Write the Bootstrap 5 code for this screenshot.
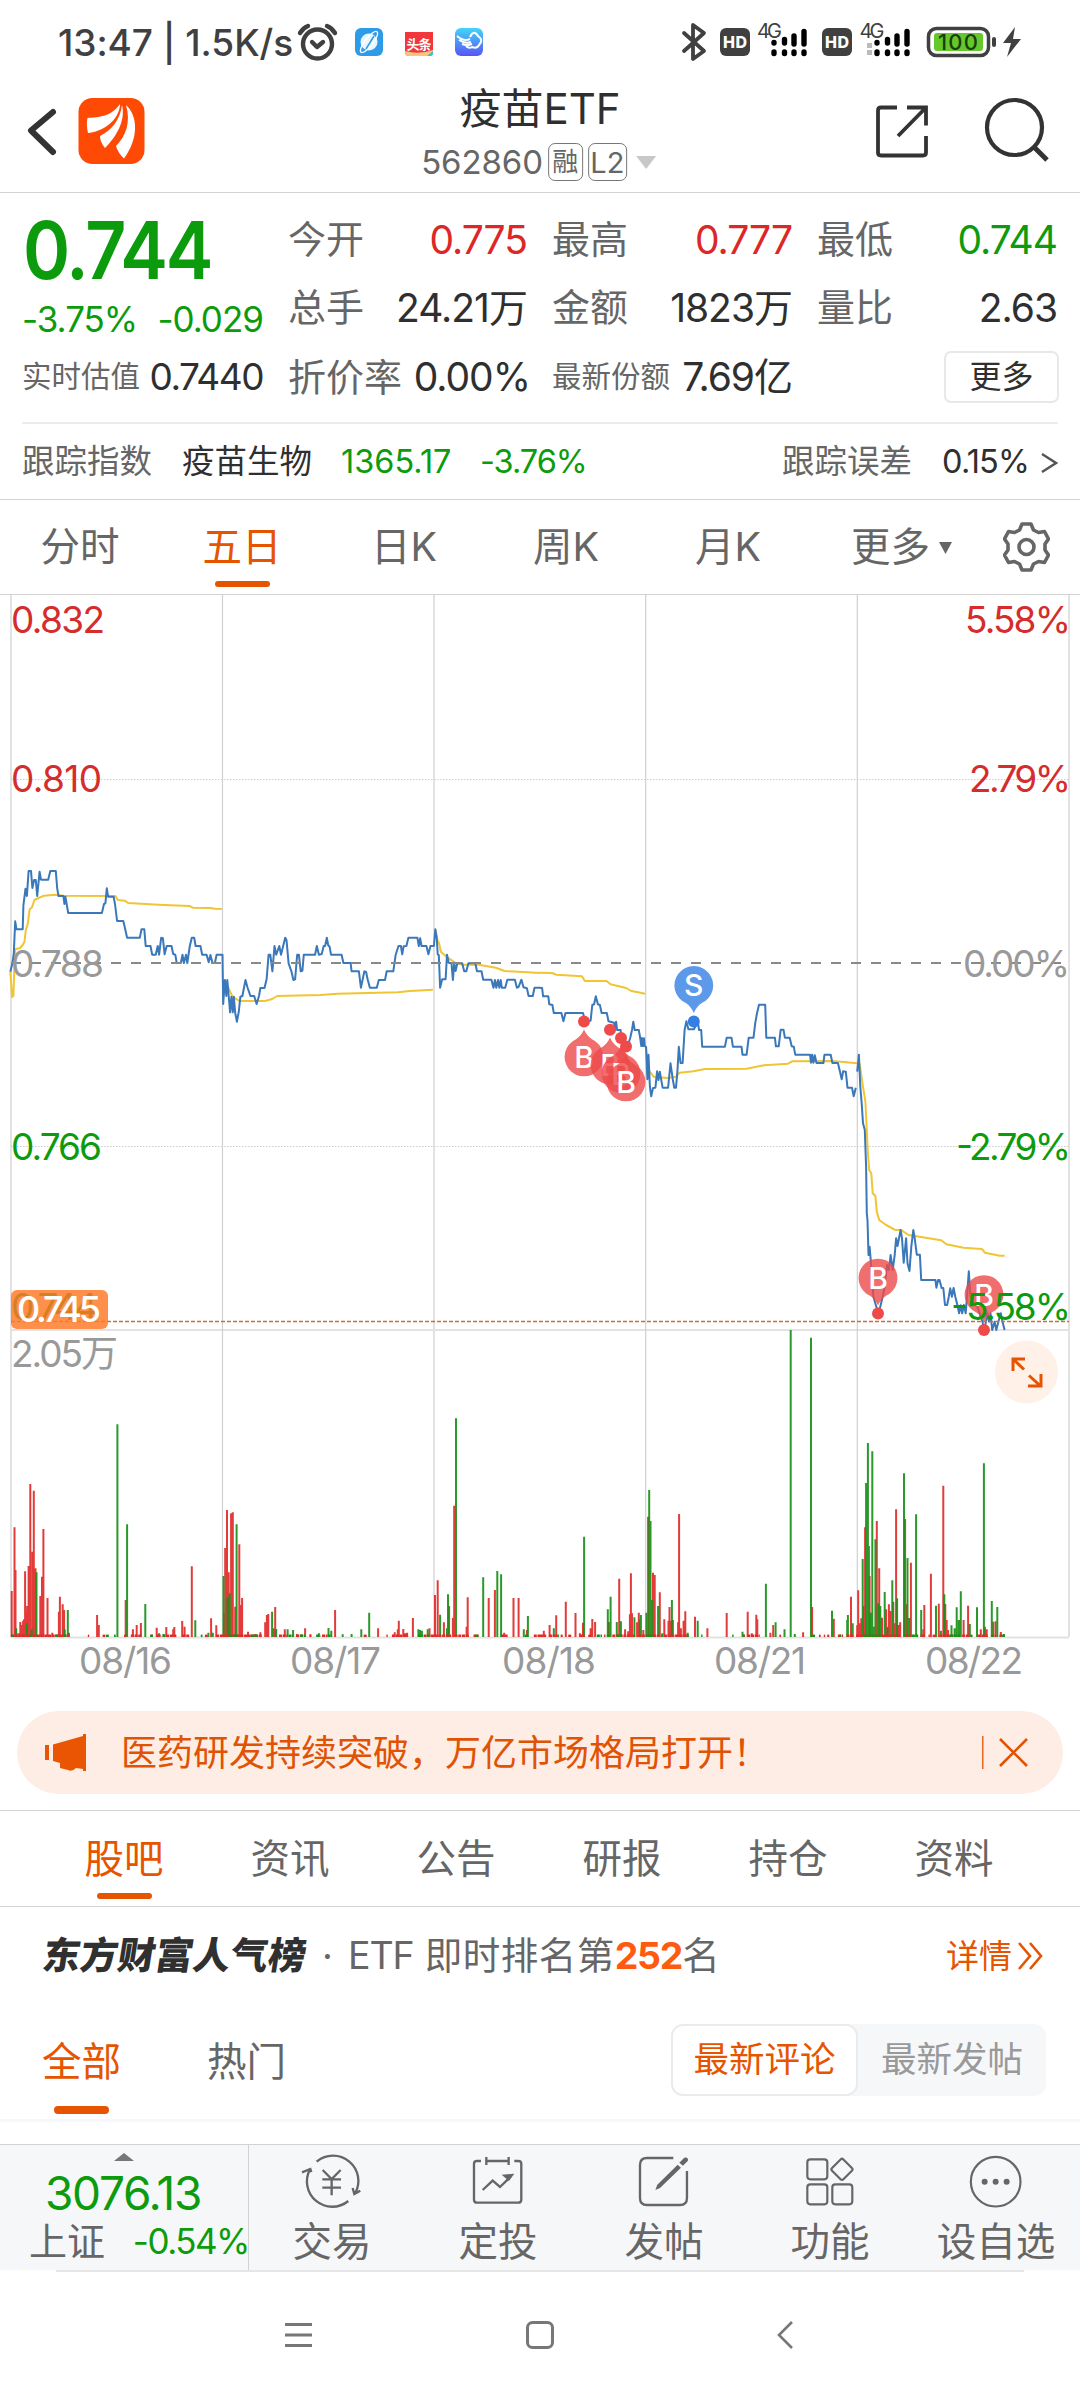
<!DOCTYPE html>
<html lang="zh-CN">
<head>
<meta charset="utf-8">
<meta name="viewport" content="width=device-width, initial-scale=1">
<title>疫苗ETF 562860</title>
<link href="https://cdn.jsdelivr.net/npm/bootstrap@5.3.0/dist/css/bootstrap.min.css" rel="stylesheet">
<style>
:root{--up:#dd2727;--down:#0c9b0c;--brand:#e65400;--ink:#2f2f2f;--sub:#666;--rule:#d2d2d2}
body{width:1080px;height:2400px;margin:0;overflow:hidden;background:#fff;color:var(--ink);font-family:Inter,"Noto Sans CJK SC",sans-serif;font-size:38px;line-height:1;font-weight:400;white-space:nowrap}
svg{display:block;flex:none}
svg text{font-family:Inter,"Noto Sans CJK SC",sans-serif}
.up{color:var(--up)}.down{color:var(--down)}.sub{color:var(--sub)}.brand{color:var(--brand)}
.status-bar{height:84px;padding:0 0 0 58px;color:#404040}
.status-bar .clock{font-size:37px;font-weight:500;width:236px;letter-spacing:-.05px}
.title-bar{height:109px;border-bottom:1px solid var(--rule)}
.title-bar .heading{font-size:42px;height:46px;line-height:46px}
.title-bar .code{font-size:33px;color:#666;letter-spacing:-.1px}
.tag-box{border:1.6px solid #777;border-radius:7px;height:38px;font-size:26px;color:#666}
.quote{height:307px;border-bottom:1px solid var(--rule)}
.quote-grid{display:grid;grid-template-columns:240px 238px 239px 239px;column-gap:26px;padding-left:23px}
.price{font-size:80px;font-weight:600;height:112px;line-height:114px;letter-spacing:-2.4px;transform:scaleX(.895);transform-origin:0 0}
.delta{font-size:35px;height:28px;line-height:28px;letter-spacing:-1px;margin-left:-1px}
.cell68{height:68px}
.quote-grid .sub{margin-left:-1px}
.num{font-size:39px;letter-spacing:-1px}
.s30{font-size:29.5px}
.more-btn{width:115px;height:52px;border:2px solid #e8e8e8;border-radius:7px;font-size:32px;color:var(--ink);padding:0;line-height:46px}
.track{height:76px;font-size:32.5px;margin:0 22px;border-top:2px solid #ececec;padding-top:3px}
.period-tabs{height:95px;font-size:39.5px;color:var(--sub);border-bottom:1px solid var(--rule)}
.period-tabs .tab{width:162px;left:-1px}
.tab{position:relative;height:100%;display:flex;align-items:center;justify-content:center;padding-top:2px}
.tab.on{color:var(--brand)}
.tab.on::after{content:"";position:absolute;left:50%;bottom:7px;width:55px;height:6px;margin-left:-27.5px;border-radius:4px;background:var(--brand)}
.notice{height:83px;margin:17px 17px 16px;border-radius:42px;background:#fdede4;color:#e05204;font-size:36px;padding:0 35px 0 28px}
.news-tabs{height:97px;border-top:1px solid var(--rule);border-bottom:1px solid var(--rule);padding:0 42px;font-size:39.5px;color:var(--sub)}
.news-tabs .tab{width:166px;left:-1px}
.rank{height:98px;padding:0 36px 0 43px;font-size:37.5px;color:var(--sub)}
.rank .brandmark{font-weight:900;font-size:37.6px;transform:skewX(-9deg);color:#303030;width:264px}
.filter{height:117px;padding:0 34px 0 42px;font-size:39.5px;border-bottom:3px solid #f6f7f8}
.filter .tab{height:114px}
.filter .tab.on::after{bottom:5px;height:8px}
.seg{height:72px;width:375px;background:#f6f7f9;border-radius:12px;font-size:35.5px}
.seg .pick{width:187px;height:72px;border:2px solid #eaebec;border-radius:12px;background:#fff;color:var(--brand)}
.dock{height:126px;margin-top:22px;background:#f6f7f9;border-top:1px solid var(--rule);color:#666;position:relative}
.dock .index{width:249px;border-right:1px solid var(--rule)}
.dock .item{width:166px;padding-top:8px;font-size:39.5px}
.dock .item span{line-height:50px;margin-top:7px}
.dock-line{height:2px;margin:0 56px;background:#e6e6e6}
.sysnav{height:126px;padding:0 287px 0 285px}
</style>
<script src="https://cdn.jsdelivr.net/npm/bootstrap@5.3.0/dist/js/bootstrap.bundle.min.js"></script>
</head>
<body>
<header>
<div class="status-bar d-flex align-items-center">
  <span class="clock">13:47 | 1.5K/s</span>
  <svg width="786" height="84" viewBox="294 0 786 84">
    <g fill="none" stroke="#404040" stroke-width="4.4" stroke-linecap="round" stroke-linejoin="round">
      <circle cx="317.500" cy="44" r="14.500"/><path d="M312 42l5 5 6-5M300 33q3-5 8-7M335 33q-3-5-8-7"/>
      <path d="M684 33l20 18-11 8V25l11 8-20 18" stroke-width="3.800"/>
    </g>
    <defs><linearGradient id="pb" x2="0" y2="1"><stop stop-color="#42d5fa"/><stop offset="1" stop-color="#5a54f5"/></linearGradient></defs>
    <rect x="355" y="28" width="28" height="28" rx="6" fill="#2e9be8"/>
    <circle cx="369" cy="42" r="8.500" fill="#eaf6ff"/><ellipse cx="369" cy="42" rx="13" ry="4" transform="rotate(-52 369 42)" fill="none" stroke="#fff" stroke-width="1.300"/>
    <path d="M366 49l8-13" stroke="#2e9be8" stroke-width="1.500"/>
    <path d="M405 32h28v20q0 4-4 4h-20q-4 0-4-4z" fill="#f2363b"/><path d="M405 51q14 4 28-1v3q-1 3-4 3h-20q-4 0-4-4z" fill="#f7c67c"/><path d="M427 56l6-5v2q0 3-3 3z" fill="#28c5dc"/>
    <text x="406.500" y="48.500" font-size="13" font-weight="700" fill="#fff" textLength="25">头条</text>
    <rect x="455" y="28" width="28" height="28" rx="6" fill="url(#pb)"/>
    <path d="M457 36q7 6 13 3M459 40q6 4 12 2M462 44q5 2 10 0M470 37q4-8 8-1 6 4 1 9-2 4-7 2-3 2-6-1" fill="none" stroke="#fff" stroke-width="2"/>
    <g fill="#404040"><rect x="720" y="28" width="30" height="28" rx="6"/><rect x="822" y="28" width="30" height="28" rx="6"/></g>
    <g fill="#fff" font-size="16" font-weight="800"><text x="723" y="48" textLength="24">HD</text><text x="825" y="48" textLength="24">HD</text></g>
    <g fill="#404040" font-size="20"><text x="757" y="38" textLength="25">4G</text><text x="859.500" y="38" textLength="25">4G</text></g>
    <g stroke="#000" stroke-width="5.400" stroke-linecap="round">
      <path d="M774 42.500v.5M774 52v1.500M784.500 39.500v3.500M784.500 52v1.500M794 36v8M794 52v1.500M804 31.500v12.500M804 52v1.500"/>
      <path d="M877 42.500v.5M877 52v1.500M887.500 39.500v3.500M887.500 52v1.500M897 36v8M897 52v1.500M907 31.500v12.500M907 52v1.500"/>
    </g>
    <path d="M867 43h5v5h-5zM867 50h5v5h-5z" fill="#bbb"/>
    <rect x="928.500" y="28.500" width="60" height="27" rx="8" fill="#fff" stroke="#404040" stroke-width="3.500"/>
    <rect x="934" y="33" width="49" height="18" rx="3" fill="#64c82c"/><rect x="992" y="37" width="4" height="10" rx="2" fill="#404040"/>
    <text x="938" y="50" font-size="22" font-weight="500" fill="#1d3d0c" textLength="40">100</text>
    <path d="M1015 27l-12 16h8l-4 14 14-18h-8z" fill="#404040"/>
  </svg>
</div>
<div class="title-bar position-relative d-flex align-items-start justify-content-between">
  <svg width="150" height="100" viewBox="0 84 150 100">
    <path d="M53 112L31 130.500 53 152" fill="none" stroke="#333" stroke-width="6" stroke-linecap="round" stroke-linejoin="round"/>
    <rect x="78.500" y="98" width="66" height="66" rx="14" fill="#ff4a05"/>
    <path d="M87.500 118C99 117 111 117 120 104C120 116 108 131 88 133Q86 125 87.500 118Z M100 136C112 130 120 120 122 105C126 121 116 137 105 148Q100 142 100 136Z M116 146C126 136 131 122 126 105C138 116 139 138 124 158.500Q118 153 116 146Z" fill="#fff"/>
  </svg>
  <div class="position-absolute start-50 translate-middle-x d-flex flex-column align-items-center">
    <div class="heading" style="margin-top:2px">疫苗ETF</div>
    <div class="d-flex align-items-center" style="gap:5px;margin:11px 3px 0 0;height:38px">
      <span class="code">562860</span>
      <span class="tag-box d-flex align-items-center justify-content-center" style="width:35px">融</span>
      <span class="tag-box d-flex align-items-center justify-content-center" style="width:39px;font-size:29px">L2</span>
      <svg width="20" height="13" style="margin-left:4px"><path d="M0 0h20L10 13z" fill="#c8c8c8"/></svg>
    </div>
  </div>
  <svg width="230" height="100" viewBox="850 84 230 100" fill="none" stroke="#333" stroke-width="3.800">
    <path d="M897 107.500h-16q-3 0-3 3v42q0 3 3 3h42q3 0 3-3v-16.500M907 107.500h19v18M926 107.500L898 136"/>
    <circle cx="1014.500" cy="127.500" r="27.500" stroke-width="4.200"/><path d="M1034 147l13 13" stroke-width="5"/>
  </svg>
</div>
</header>

<section class="quote">
  <div class="quote-grid">
    <div class="down">
      <div class="price">0.744</div>
      <div class="delta d-flex justify-content-between"><span>-3.75%</span><span>-0.029</span></div>
    </div>
    <div style="padding-top:12px">
      <div class="cell68 d-flex align-items-center justify-content-between"><span class="sub">今开</span><span class="num up">0.775</span></div>
      <div class="cell68 d-flex align-items-center justify-content-between"><span class="sub">总手</span><span class="num">24.21万</span></div>
    </div>
    <div style="padding-top:12px">
      <div class="cell68 d-flex align-items-center justify-content-between"><span class="sub">最高</span><span class="num up">0.777</span></div>
      <div class="cell68 d-flex align-items-center justify-content-between"><span class="sub">金额</span><span class="num">1823万</span></div>
    </div>
    <div style="padding-top:12px">
      <div class="cell68 d-flex align-items-center justify-content-between"><span class="sub">最低</span><span class="num down">0.744</span></div>
      <div class="cell68 d-flex align-items-center justify-content-between"><span class="sub">量比</span><span class="num">2.63</span></div>
    </div>
  </div>
  <div class="quote-grid" style="height:81px">
    <div class="d-flex align-items-center justify-content-between" style="height:71px"><span class="sub s30">实时估值</span><span style="font-size:37px;letter-spacing:-1.500px">0.7440</span></div>
    <div class="d-flex align-items-center justify-content-between" style="height:71px"><span class="sub">折价率</span><span class="num" style="letter-spacing:-1px;margin-right:-3px">0.00%</span></div>
    <div class="d-flex align-items-center justify-content-between" style="height:71px"><span class="sub s30">最新份额</span><span class="num">7.69亿</span></div>
    <div class="d-flex align-items-center justify-content-end" style="height:71px;margin-right:-2px"><button class="more-btn btn bg-white">更多</button></div>
  </div>
  <div class="track d-flex align-items-center justify-content-between">
    <div class="d-flex"><span class="sub" style="width:160px">跟踪指数</span><span style="width:159px">疫苗生物</span><span class="down" style="width:139px;letter-spacing:0">1365.17</span><span class="down" style="letter-spacing:-1px">-3.76%</span></div>
    <div class="d-flex align-items-center"><span class="sub" style="width:160px">跟踪误差</span><span style="width:99px;letter-spacing:-.800px">0.15%</span>
      <svg width="17" height="20" viewBox="0 0 17 20"><path d="M1 1l14 9L1 19" fill="none" stroke="#555" stroke-width="2.400"/></svg></div>
  </div>
</section>

<nav class="period-tabs d-flex">
  <span class="tab">分时</span><span class="tab on">五日</span><span class="tab">日K</span><span class="tab">周K</span><span class="tab">月K</span>
  <span class="tab" style="width:185px">更多<svg width="13" height="12" style="margin-left:9px"><path d="M0 0h13L6.500 12z" fill="#666"/></svg></span>
  <svg class="align-self-center" style="margin-left:8px" width="47" height="50" viewBox="0 0 47 50" fill="none" stroke="#666" stroke-width="3.600" stroke-linejoin="round"><path d="M19 2h9l2.500 6 5 2.500 6-1 4 7.500-3.500 5v6l3.500 5-4 7.500-6-1-5 2.500-2.500 6h-9l-2.500-6-5-2.500-6 1-4-7.500 3.500-5v-6l-3.500-5 4-7.500 6 1 5-2.500z"/><circle cx="23.500" cy="25" r="7.500"/></svg>
</nav>

<main>
<svg id="chart" width="1080" height="1099" viewBox="0 595 1080 1099">
  <g fill="none" stroke="#e2e2e2" stroke-width="2">
    <path d="M11 595V1637M434 595V1637M1069 595V1637M11 1330H1069M11 1637.500H1069"/>
    <path d="M222.500 595V1637M645.700 595V1637M857.300 595V1637" stroke="#d0d0d0" stroke-width="1.200"/>
    <path d="M11 779.500H1069M11 1146.500H1069" stroke="#ccc" stroke-width="1" stroke-dasharray="1.500 1.500"/>
  </g>
  <g id="volume"></g>
  <g id="lines" fill="none" stroke-linejoin="round"></g>
  <path d="M11 963H1069" stroke="#888" stroke-width="2" stroke-dasharray="10 10"/>
  <path d="M11 1321.500H1069" stroke="#c8703a" stroke-width="1.300" stroke-dasharray="4 2"/>
  <g id="pins"></g>
  <g font-size="37">
    <g fill="#d52c2c"><text x="11" y="633" textLength="94">0.832</text><text x="11" y="792" textLength="91">0.810</text><text x="965" y="633" textLength="106">5.58%</text><text x="969" y="792" textLength="102">2.79%</text></g>
    <g fill="#999"><text x="11" y="976.500" textLength="93">0.788</text><text x="963" y="976.500" textLength="107">0.00%</text><text x="11" y="1367" textLength="107">2.05万</text>
      <text x="79" y="1674" textLength="93">08/16</text><text x="290" y="1674" textLength="91">08/17</text><text x="502" y="1674" textLength="94">08/18</text><text x="714" y="1674" textLength="92">08/21</text><text x="925" y="1674" textLength="98">08/22</text></g>
    <g fill="#0c9b0c"><text x="11" y="1159.500" textLength="91">0.766</text><text x="956" y="1159.500" textLength="115">-2.79%</text><text x="951" y="1319.500" textLength="120">-5.58%</text><text x="11" y="1319.500" textLength="87">0.744</text></g>
  </g>
  <rect x="11" y="1290" width="97" height="39" rx="6" fill="#ff7a26" fill-opacity=".83"/>
  <text x="17" y="1321.500" font-size="36" font-weight="500" fill="#fff" textLength="84">0.745</text>
  <circle cx="1026.500" cy="1372" r="31.500" fill="#fff0e8"/>
  <path d="M1013 1371v-12h12M1013.500 1359.500l10.500 10M1028 1386h13v-12M1029 1375.500l11.500 10.500" fill="none" stroke="#e65400" stroke-width="3"/>
</svg>

<div class="notice d-flex align-items-center">
  <svg width="42" height="37" viewBox="0 0 42 37" fill="#ea5504"><path d="M0 11h4v15H0zM8 10.500L38 2V0h3v37h-3v-2l-7-1q-4 4-8 2l-8-2v-5l-7-2z"/></svg>
  <span style="margin-left:34px" class="flex-grow-1">医药研发持续突破，万亿市场格局打开！</span>
  <svg width="46" height="35" viewBox="0 0 46 35" fill="none" stroke="#e05204"><path d="M.8 1v33" stroke-width="1.300"/><path d="M18 4l27 27M45 4L18 31" stroke-width="2.600"/></svg>
</div>

<nav class="news-tabs d-flex"><span class="tab on">股吧</span><span class="tab">资讯</span><span class="tab">公告</span><span class="tab">研报</span><span class="tab">持仓</span><span class="tab">资料</span></nav>

<div class="rank d-flex align-items-center">
  <span class="brandmark">东方财富人气榜</span>
  <span style="width:41px;text-align:center">·</span>
  <span class="flex-grow-1" style="letter-spacing:.500px"><span style="letter-spacing:-1.100px">ETF</span> 即时排名第<b style="color:#ff5b10;letter-spacing:-1.200px">252</b>名</span>
  <span class="brand d-flex align-items-center" style="font-size:33px">详情<svg width="27" height="28" viewBox="0 0 27 28" style="margin-left:5px" fill="none" stroke="#e65400" stroke-width="2.600"><path d="M2 1l11 13L2 27M13 1l11 13-11 13"/></svg></span>
</div>

<div class="filter d-flex align-items-center">
  <span class="tab on" style="width:79px">全部</span><span class="tab" style="margin-left:86px;color:#666">热门</span>
  <div class="seg d-flex ms-auto align-self-start" style="margin-top:19px"><span class="pick d-flex align-items-center justify-content-center">最新评论</span><span class="flex-grow-1 d-flex align-items-center justify-content-center" style="color:#999">最新发帖</span></div>
</div>
</main>

<footer>
<div class="dock d-flex">
  <div class="index">
    <svg width="20" height="8" style="margin:8px 0 0 114px"><path d="M10 0l10 8H0z" fill="#777"/></svg>
    <div class="down" style="font-size:46px;letter-spacing:-1.300px;padding-left:45px;line-height:50px;margin-top:7px">3076.13</div>
    <div class="d-flex justify-content-between align-items-center" style="padding-left:29px;line-height:46px"><span>上证</span><span class="down" style="font-size:35px;letter-spacing:-1.500px;margin-right:-1px">-0.54%</span></div>
  </div>
  <div class="item d-flex flex-column align-items-center"><svg width="63.300" height="56.700" viewBox="120 40 190 170" fill="none" stroke="#666" stroke-width="7"><path d="M170 66A76 76 0 0 1 285 162M301 153L283 163 278 145M265 184A76 76 0 0 1 150 89M126 98L151 88 154 97M188 91L215 118 242 91M187 119H243M187 144H243M215 118V167"/></svg><span>交易</span></div>
  <div class="item d-flex flex-column align-items-center"><svg width="63.300" height="56.700" viewBox="619 40 190 170" fill="none" stroke="#666" stroke-width="7"><path d="M664 64H652Q643 64 643 72V180Q643 189 652 189H776Q785 189 785 180V72Q785 64 776 64H764M680 52V76M747 52V76M680 64H747M669 151L699 123 721 142 750 114"/><path d="M726 105L764 102 748 124Z" fill="#666" stroke="none"/></svg><span>定投</span></div>
  <div class="item d-flex flex-column align-items-center"><svg width="63.300" height="56.700" viewBox="1118 40 190 170" fill="none" stroke="#666" stroke-width="7"><path d="M1242 55H1163Q1142 55 1142 76V175Q1142 196 1163 196H1262Q1283 196 1283 175V94"/><path d="M1188 151L1194 135 1255 75 1265 84 1202 145ZM1260 69L1275 54Q1287 50 1286 63L1271 78Z" fill="#666" stroke="none"/></svg><span>发帖</span></div>
  <div class="item d-flex flex-column align-items-center"><svg width="63.300" height="56.700" viewBox="415 40 190 170" fill="none" stroke="#666" stroke-width="6.500"><rect x="443" y="59" width="60" height="60" rx="9"/><rect x="443" y="134" width="60" height="60" rx="9"/><rect x="518" y="134" width="60" height="60" rx="9"/><rect x="523" y="65" width="48" height="48" rx="6" transform="rotate(45 547 89)"/></svg><span>功能</span></div>
  <div class="item d-flex flex-column align-items-center"><svg width="63.300" height="56.700" viewBox="913 40 190 170" fill="none" stroke="#666" stroke-width="6.500"><circle cx="1008" cy="126" r="74.500"/><g fill="#666" stroke="none"><circle cx="975" cy="126" r="9"/><circle cx="1008" cy="126" r="9"/><circle cx="1041" cy="126" r="9"/></g></svg><span>设自选</span></div>
</div>
<div class="dock-line"></div>
<div class="sysnav d-flex align-items-center justify-content-between">
  <svg width="27" height="26" fill="none" stroke="#777" stroke-width="3"><path d="M0 2.500h27M0 13h27M0 23.500h27"/></svg>
  <svg width="28" height="28" style="margin-right:9px" fill="none" stroke="#777" stroke-width="3"><rect x="1.500" y="1.500" width="25" height="25" rx="5"/></svg>
  <svg width="16" height="28" fill="none" stroke="#777" stroke-width="2.600"><path d="M15 1L2 14l13 13"/></svg>
</div>
</footer>

<script>
const NS='http://www.w3.org/2000/svg';
function el(parent,tag,attrs,text){const e=document.createElementNS(NS,tag);for(const k in attrs)e.setAttribute(k,attrs[k]);if(text)e.textContent=text;parent.appendChild(e);return e;}
const SX=1/2.9037, SY=1/3;
// Every series is a list of raw sample points plus the origin of its half of the canvas.
function pts(raw,ox,oy){return raw.trim().split(/\s+/).map(p=>{const [u,v]=p.split(',').map(Number);return (ox+u*SX).toFixed(1)+','+(oy+v*SY).toFixed(1);}).join(' ');}
const avg=[
 ['30,455 35,531 39,528 42,430 44,388 58,384 66,375 71,365 75,330 81,310 86,268 93,262 100,240 112,234 128,227 160,224 185,227 335,228 342,240 362,242 372,249 460,254 550,258 560,263 610,264 625,266 644,267',0,820],
 ['653,480 664,505 675,530 695,543 770,543 790,537 805,528 930,525 980,521 1155,517 1190,513 1257,509',0,820],
 ['1264,328 1270,360 1275,370 1280,395 1300,413 1325,430 1345,434 1390,434 1440,443 1465,453 1520,456 1568,459',0,820],
 ['0,158 35,159 48,164 122,169 130,183 193,183 205,193 250,204 265,213 285,217 305,221',540,920],
 ['307,381 315,450 330,470 370,474 395,470 405,458 445,454 480,447 600,446 650,436 720,431 732,424 850,423 921,430',540,920],
 ['928,430 938,500 945,545 952,700 956,750 962,760 966,820 974,828 978,875 985,900 1005,915 1030,929 1050,931 1070,945 1165,961 1180,973 1230,983 1283,987 1292,998 1335,1007 1349,1007',540,920]];
const price=[
 ['30,455 36,430 40,400 44,304 48,328 66,328 68,256 74,206 78,228 83,153 90,153 94,204 99,180 104,180 108,228 115,155 119,179 140,179 146,153 162,153 166,205 170,228 184,228 187,252 190,230 198,279 296,279 302,252 306,250 310,205 314,230 330,230 334,252 340,303 358,303 364,330 369,353 406,353 411,328 419,328 423,378 437,378 442,404 452,404 458,378 462,404 468,353 473,355 478,403 484,378 498,378 503,402 509,404 513,429 525,429 530,404 534,429 540,404 544,429 551,378 557,353 564,353 568,378 582,378 587,404 600,404 606,427 611,405 617,429 624,429 629,404 646,404 648,552 653,480 657,528 660,480 664,528 668,577 672,530 676,577 679,530 683,578 688,605 693,577 698,530 704,528 713,480 719,503 727,528 738,528 745,552 752,528 756,504 768,504 774,478 780,404 785,404 791,454 797,378 802,404 811,378 816,404 828,353 832,360 838,430 846,454 852,480 857,478 863,404 868,404 873,454 878,452 882,404 915,404 920,378 926,404 934,402 940,378 944,378 949,353 953,376 957,380 961,404 992,404 997,429 1018,429 1021,454 1042,454 1048,503 1058,454 1063,456 1068,480 1074,503 1094,503 1100,480 1118,480 1123,454 1142,454 1149,404 1157,378 1164,378 1168,403 1172,379 1180,378 1186,353 1212,353 1216,378 1220,355 1224,378 1238,378 1244,403 1250,378 1260,378 1264,328 1268,353 1271,403 1274,405 1278,503 1284,478 1294,478 1298,404 1303,428 1311,430 1315,480 1319,430 1323,453 1328,430 1342,430 1348,454 1354,454 1360,430 1380,430 1385,454 1398,454 1403,479 1427,479 1433,503 1437,480 1441,503 1446,480 1450,503 1454,480 1457,503 1467,503 1473,479 1495,479 1501,503 1506,501 1514,479 1520,502 1530,505 1535,528 1547,528 1552,503 1568,503',0,820],
 ['0,203 6,204 9,229 24,229 27,253 36,255 40,279 62,279 68,304 74,279 125,279 131,304 147,302 152,255 157,253 162,229 168,253 174,255 179,279 194,279 199,304 215,308 218,330 221,305 224,330 234,330 240,380 254,380 262,354 267,330 271,305 275,330 287,330 291,354 294,378 296,354 299,378 302,355 304,378 308,381 312,478 315,404 319,500 323,529 328,504 335,503 340,454 344,480 348,455 356,503 372,503 379,430 386,480 390,503 395,503 399,455 403,380 408,429 414,429 420,330 425,304 431,328 447,328 458,305 462,330 468,330 471,380 537,380 542,353 556,353 560,380 585,380 588,404 600,404 606,353 620,353 625,310 630,280 636,254 654,254 657,353 682,353 685,379 693,379 699,329 707,329 711,353 725,353 731,379 737,380 741,404 784,404 787,428 790,404 794,428 798,406 803,429 823,429 826,404 844,404 849,429 865,429 871,455 876,478 880,454 888,455 893,503 906,503 911,529 917,503',540,920],
 ['921,455 926,404 930,500 934,550 938,610 943,630 947,740 949,880 951,900 954,1005 957,980 961,1030 968,1130 975,1155 981,1175 987,1165 995,1130 1001,1100 1008,1035 1013,1050 1018,1005 1024,1050 1030,1005 1034,955 1038,978 1047,930 1051,955 1056,1028 1063,955 1067,1030 1073,1053 1078,980 1084,930 1088,955 1094,1004 1103,1004 1107,1080 1148,1080 1151,1103 1156,1080 1160,1080 1166,1104 1171,1104 1176,1155 1182,1155 1187,1130 1191,1105 1196,1130 1201,1104 1206,1130 1212,1155 1217,1180 1222,1156 1226,1180 1231,1155 1236,1180 1240,1130 1245,1054 1250,1130 1258,1150 1270,1160 1280,1190 1285,1205 1289,1230 1295,1205 1299,1180 1304,1205 1308,1180 1313,1230 1320,1205 1325,1230 1331,1205 1338,1180 1343,1205 1349,1230',540,920]];
const L=document.getElementById('lines');
avg.forEach(s=>el(L,'polyline',{points:pts(...s),stroke:'#f0c433','stroke-width':2}));
price.forEach(s=>el(L,'polyline',{points:pts(...s),stroke:'#3a78ba','stroke-width':2}));

// Volume bars: x sample, top sample.
const vol=[
 [0,'r','34,933 42,742 45,870 53,1060 59,1026 64,1035 67,1022 70,1018 73,874 76,995 79,978 83,858 88,612 94,815 98,632 103,865 117,948 122,890 126,747 138,954 152,1058 171,995 174,950 182,973 186,990 200,1058 282,1005 287,1035 365,960 386,1048 397,1035 409,1029 455,1043 483,1041 503,1048 506,1041 529,1023 536,1040 557,859 613,1015 628,1036 651,1000 654,804 659,690 664,877 671,700 676,697 683,980 695,793 699,975 703,954 720,1055 741,1062 756,1057 770,1027 775,1005 779,1002 795,1045 799,981 827,1048 862,1062 886,1045 901,1063 973,990 1098,1045 1146,1057 1155,1048 1158,1022 1171,1047 1177,1060 1182,1058 1199,1014 1247,1045 1263,945 1271,901 1289,1027 1304,978 1315,1014 1319,677 1358,952 1355,1040 1419,954 1437,930 1491,954 1506,954 1464,1058 1530,1050'],
 [0,'g','47,1045 78,1030 92,1048 106,877 188,1048 197,990 341,433 369,733 422,972 462,1060 475,1062 567,1021 605,1058 618,1058 649,888 661,952 667,940 687,733 790,995 802,1047 835,1048 851,1050 926,1060 954,1044 962,1052 995,1063 1021,1062 1049,1048 1072,998 1215,1048 1220,1050 1225,1052 1242,1048 1278,1004 1301,943 1298,1045 1324,415 1403,892 1444,873 1455,883 1521,1048 1533,1008'],
 [540,'r','11,1052 28,1035 47,1006 75,965 103,999 116,1060 125,1028 147,1045 152,1017 160,1026 200,1026 230,896 247,1048 256,1054 261,1003 264,880 267,1000 282,1027 287,998 300,1050 314,710 328,878 333,885 348,937 361,1018 373,1022 376,981 380,1022 386,1020 401,1027 404,702 409,1045 417,1022 422,994 450,1010 486,1045 542,999 603,995 615,1060 628,1004 631,1018 669,1058 677,1035 764,1057 790,981 853,1016 903,950 924,931 921,1036 928,1030 933,1015 940,978 944,742 957,888 978,723 985,865 993,1013 1005,988 1013,973 1018,993 1010,1040 1026,965 1034,688 1030,1030 1040,1035 1046,1027 1060,717 1064,973 1077,848 1116,975 1113,1048 1135,881 1158,971 1171,617 1177,972 1181,1020 1185,1050 1230,1020 1243,977 1280,1048 1292,1040 1297,1048 1316,1025 1323,1024 1338,1056'],
 [540,'g','40,1045 128,770 197,988 205,950 223,1026 235,1024 274,1012 290,1018 293,1005 309,998 317,630 321,723 325,960 343,978 355,1060 383,960 429,1058 458,1022 588,1055 656,911 684,1027 710,1048 740,1062 728,150 787,173 848,992 892,1020 894,1005 908,1030 937,837 947,609 952,489 955,798 960,998 965,514 969,1040 974,778 982,970 988,978 972,1040 1001,936 1009,1045 1023,901 1037,955 1057,580 1067,834 1072,1014 1092,703 1107,990 1150,977 1164,1052 1174,943 1195,1036 1204,1045 1210,982 1216,1020 1222,934 1248,1032 1269,982 1289,550 1312,963 1328,981 1347,1062']];
const V=document.getElementById('volume');
const tint={r:'#e02a28',g:'#189018'};
vol.forEach(([ox,c,list])=>{const d=list.split(' ').map(p=>{const [u,v]=p.split(',').map(Number);return `M${(ox+u*SX).toFixed(1)} ${(1280+v*SY).toFixed(1)}V1637`;}).join('');
 el(V,'path',{d,stroke:tint[c],'stroke-width':2,'stroke-opacity':.92});});
// Minutes with hardly any trades leave a stub on the baseline.
const stubs=[[0,'r','32-202 255-259 298-306 360-367 380-412 437-444 455-468 483-512 530-550 595-603 628-655 655-760 810-835 860-880 900-904 935-950 1056-1065 1122-1126 1138-1185 1230-1310 1320-1362 1375-1390 1455-1474 1550-1568'],[0,'g','34-38 85-92 160-170 184-196 308-316 331-336 436-444 472-480 583-588 665-690 728-748 838-852 871-886 918-930 951-964 1214-1228 1240-1246 1380-1390 1524-1534'],
 [540,'r','0-18 26-50 60-66 82-92 115-130 140-148 186-190 210-265 285-345 360-430 590-595 602-638 695-700 810-815 824-828 834-840 865-880 890-912 918-1046 1060-1078 1105-1118 1128-1132 1140-1150 1160-1200 1226-1250 1272-1300 1310-1325 1334-1345'],[540,'g','50-55 165-180 194-202 222-238 270-276 308-326 352-356 426-432 468-472 558-562 590-594 790-800 870-874 940-990 1080-1098 1190-1220 1250-1256 1312-1316 1342-1350']];
stubs.forEach(([ox,c,list])=>list.split(' ').forEach(r=>{const [a,b]=r.split('-').map(Number);
 el(V,'path',{d:`M${ox+a*SX} 1635.800H${ox+b*SX}`,stroke:tint[c],'stroke-width':2.4,'stroke-dasharray':'3 .7'});}));

// Trade pins: letter, x, bubble centre, dot centre.
[['B',584,1057,1021.5],['B',610,1065,1029.700],['B',621,1073.500,1038],['B',626,1082,1046.500],['S',693.800,985.400,1021.500],['B',878,1278,1313.500],['B',984,1294.500,1330]].forEach(([t,x,y,dot])=>{
 const s=dot>y?1:-1, P=document.getElementById('pins'), f=t==='S'?'#347fe4':'#ee4a4a';
 el(P,'path',{d:`M${x} ${y+s*27.5}Q${x-3} ${y+s*21} ${x-8} ${y+s*17.7}A19.400 19.400 0 1 ${s>0?1:0} ${x+8} ${y+s*17.7}Q${x+3} ${y+s*21} ${x} ${y+s*27.5}Z`,fill:f,'fill-opacity':.8});
 el(P,'circle',{cx:x,cy:dot,r:6,fill:f});
 el(P,'text',{x,y:y+11,'text-anchor':'middle','font-size':30,'font-weight':500,fill:'#fff'},t);
});
</script>
</body>
</html>
